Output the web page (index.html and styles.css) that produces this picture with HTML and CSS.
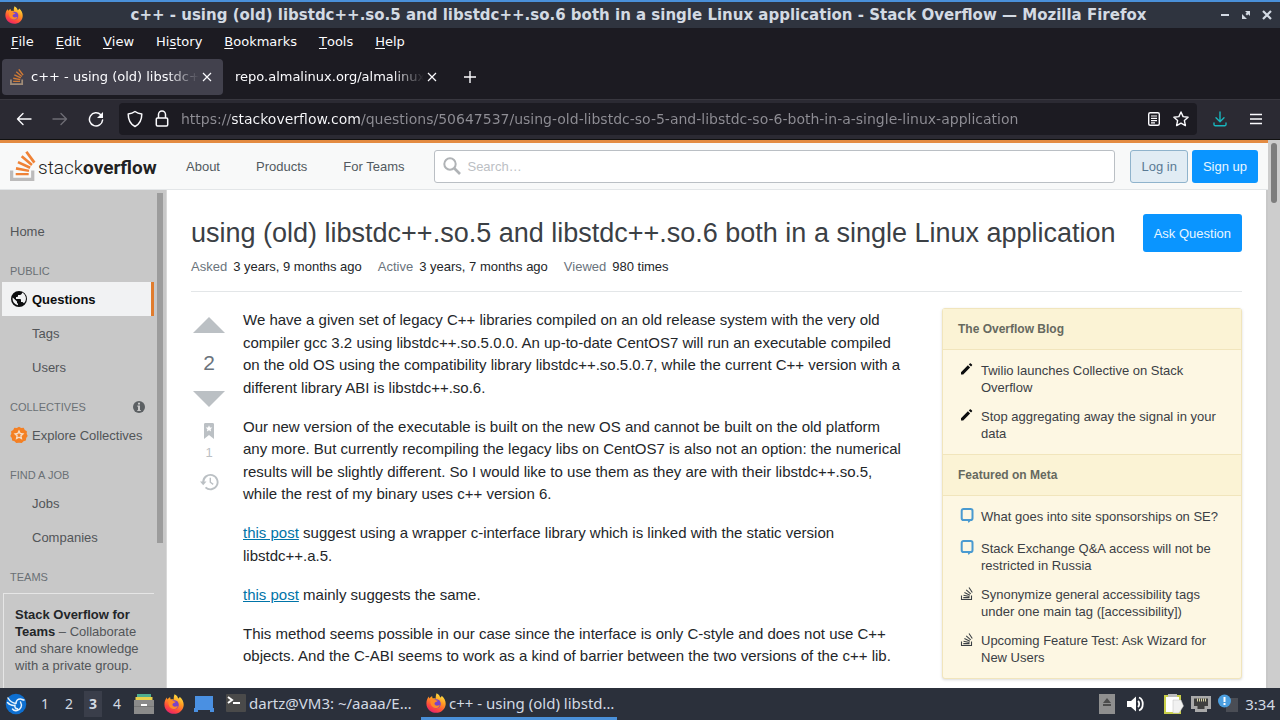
FILE: index.html
```html
<!DOCTYPE html>
<html lang="en">
<head>
<meta charset="UTF-8">
<meta name="viewport" content="width=device-width, initial-scale=1.0">
<title>c++ - using (old) libstdc++.so.5 and libstdc++.so.6 both in a single Linux application - Stack Overflow</title>
<link rel="stylesheet" href="styles.css">
</head>
<body>

<!-- shared icons -->
<svg class="defs" width="0" height="0" aria-hidden="true">
  <defs>
    <linearGradient id="ff-body" x1="0.8" y1="0" x2="0.3" y2="1">
      <stop offset="0" stop-color="#fff04a"/>
      <stop offset="0.4" stop-color="#ff9a22"/>
      <stop offset="0.75" stop-color="#ff4a3c"/>
      <stop offset="1" stop-color="#e5216f"/>
    </linearGradient>
    <symbol id="firefox" viewBox="0 0 20 20">
      <path fill="url(#ff-body)" d="M10.5 0.3c2.6 1.2 3.4 3 3.6 4.3 0.9-0.1 1.4-1 1.6-1.8 2.6 2.200 4.100 5 4 8.200-0.200 5.200-4.500 8.800-9.600 8.800C4.600 19.800 0.400 15.600 0.400 10.400c0-3 1-5.400 2.600-7 0 0.900 0.200 1.500 0.600 2 0.600-1.100 1.600-1.900 2.600-2.200-0.100 0.900 0.200 1.500 0.700 2.200 1-0.100 1.900 0 2.700 0.300 0.100-2 0.300-3.700 0.900-5.400z"/>
      <circle cx="10.300" cy="10.800" r="4.500" fill="#7a44c9"/>
      <path fill="#ff8a26" d="M4.500 7c1.500-0.900 3.500-0.800 5 0.100 0.900 0.500 1.700 0.700 2.300 0.500-0.400 1.300-1.900 1.400-2.800 2-0.900 0.700-0.700 2.300 0.900 2.900 1.600 0.500 2.700-0.500 3.900-0.100-0.900 2.100-3.300 3.200-5.600 2.400C5.300 13.700 4 10.300 4.500 7z"/>
    </symbol>
    <symbol id="stack" viewBox="0 0 32 37">
      <path fill="var(--tray)" d="M26 33v-9h4v13H0V24h4v9h22z"/>
      <path fill="var(--bars)" d="M21.500 0l-2.700 2 9.900 13.300 2.700-2L21.500 0zM26 18.400L13.300 7.800l2.100-2.500 12.700 10.600-2.100 2.500zM9.100 15.200l15 7 1.400-3-15-7-1.400 3zm14 10.790l0.680-2.950-16.100-3.350L7 23l16.100 2.990zM23 30H7v-3h16v3z"/>
    </symbol>
    <symbol id="stack-thin" viewBox="0 0 14 16">
      <path fill="none" stroke="currentColor" stroke-width="1.100" d="M1.500 9.500v4h10v-4M3.300 11.600h6.200M3.500 9.200l6 1.300M4.400 6.600l5.500 2.600M6.200 3.900l4.500 4M9 1.500l3.300 5"/>
    </symbol>
    <symbol id="pencil" viewBox="0 0 14 14">
      <path fill="currentColor" d="M1 10.200L7.900 3.300l2.200 2.200-6.900 6.900H1v-2.200zM8.800 2.400l1-1c0.300-0.300 0.700-0.300 1 0l1.200 1.200c0.300 0.300 0.300 0.700 0 1l-1 1-2.200-2.200z"/>
    </symbol>
    <symbol id="meta" viewBox="0 0 14 16">
      <path fill="none" stroke="#4a9ad0" stroke-width="2" d="M3.500 1h7.200A1.800 1.800 0 0 1 12.500 2.800v7.400A1.800 1.800 0 0 1 10.700 12H3.500a1.800 1.800 0 0 1-1.800-1.800V2.800A1.800 1.800 0 0 1 3.500 1z"/>
      <path fill="#4a9ad0" d="M7.500 12h4l-3 3z"/>
    </symbol>
    <symbol id="close" viewBox="0 0 10 10">
      <path fill="none" stroke="currentColor" stroke-width="1.200" d="M1 1l8 8M9 1L1 9"/>
    </symbol>
  </defs>
</svg>

<header class="titlebar">
  <svg class="titlebar-icon" width="18" height="18"><use href="#firefox"/></svg>
  <div class="titlebar-text">c++ - using (old) libstdc++.so.5 and libstdc++.so.6 both in a single Linux application - Stack Overflow — Mozilla Firefox</div>
  <div class="window-controls">
    <button aria-label="Minimize"><svg width="10" height="10" viewBox="0 0 10 10"><path fill="currentColor" d="M1 4h8v2H1z"/></svg></button>
    <button aria-label="Restore"><svg width="10" height="10" viewBox="0 0 10 10"><path fill="currentColor" d="M4 1h5v5L7.300 4.300 6 5.500 4.500 4l1.300-1.200zM1 4l5 5H1z"/></svg></button>
    <button aria-label="Close"><svg width="10" height="10" viewBox="0 0 10 10"><path fill="none" stroke="currentColor" stroke-width="2.200" d="M1 1l8 8M9 1L1 9"/></svg></button>
  </div>
</header>

<nav class="menubar">
  <button><u>F</u>ile</button>
  <button><u>E</u>dit</button>
  <button><u>V</u>iew</button>
  <button>Hi<u>s</u>tory</button>
  <button><u>B</u>ookmarks</button>
  <button><u>T</u>ools</button>
  <button><u>H</u>elp</button>
</nav>

<div class="tabstrip">
  <div class="tab active">
    <svg class="so-dark" width="14" height="16"><use href="#stack"/></svg>
    <span class="tab-label">c++ - using (old) libstdc++.so.5</span>
    <button aria-label="Close tab"><svg width="10" height="10"><use href="#close"/></svg></button>
  </div>
  <div class="tab">
    <span class="tab-label">repo.almalinux.org/almalinux/8</span>
    <button aria-label="Close tab"><svg width="10" height="10"><use href="#close"/></svg></button>
  </div>
  <button class="new-tab" aria-label="New tab"><svg width="12" height="12" viewBox="0 0 12 12"><path fill="none" stroke="currentColor" stroke-width="1.400" d="M6 0v12M0 6h12"/></svg></button>
</div>

<div class="toolbar">
  <button aria-label="Back"><svg width="16" height="16" viewBox="0 0 16 16"><path fill="none" stroke="currentColor" stroke-width="1.400" stroke-linecap="round" stroke-linejoin="round" d="M15 8H1.500M7 2.500L1.500 8 7 13.500"/></svg></button>
  <button aria-label="Forward" disabled><svg width="16" height="16" viewBox="0 0 16 16"><path fill="none" stroke="currentColor" stroke-width="1.400" stroke-linecap="round" stroke-linejoin="round" d="M1 8h13.500M9 2.500L14.500 8 9 13.500"/></svg></button>
  <button aria-label="Reload"><svg width="16" height="16" viewBox="0 0 16 16"><path fill="none" stroke="currentColor" stroke-width="1.500" stroke-linecap="round" d="M12.800 3.800A6.600 6.600 0 1 0 14.600 9"/><path fill="currentColor" d="M15 1v6H9z"/></svg></button>
  <div class="urlbar">
    <svg width="16" height="18" viewBox="0 0 16 18"><path fill="none" stroke="currentColor" stroke-width="1.500" stroke-linejoin="round" d="M8 1.500c2 1.500 4.200 2.200 6.800 2.500 0 5.700-1.800 10-6.800 12.500C3 14 1.200 9.700 1.200 4 3.800 3.700 6 3 8 1.500z"/></svg>
    <svg width="14" height="18" viewBox="0 0 14 18"><path fill="none" stroke="currentColor" stroke-width="1.500" d="M2.500 8h9a1.200 1.200 0 0 1 1.200 1.200v5.600a1.200 1.200 0 0 1-1.200 1.200h-9a1.200 1.200 0 0 1-1.200-1.200V9.200A1.200 1.200 0 0 1 2.500 8zM3.500 8V4.500a3.500 3.500 0 0 1 7 0V8"/></svg>
    <input type="text" aria-label="Address" value="https://stackoverflow.com/questions/50647537/using-old-libstdc-so-5-and-libstdc-so-6-both-in-a-single-linux-application">
    <button aria-label="Reader view"><svg width="14" height="16" viewBox="0 0 14 16"><rect x="1.700" y="1.700" width="10.600" height="12.600" rx="1.500" fill="none" stroke="currentColor" stroke-width="1.400"/><path stroke="currentColor" stroke-width="1.200" d="M4 5h6M4 7.300h6M4 9.600h6M4 11.900h4"/></svg></button>
    <button aria-label="Bookmark this page"><svg width="16" height="16" viewBox="0 0 16 16"><path fill="none" stroke="currentColor" stroke-width="1.400" stroke-linejoin="round" d="M8 1l2.100 4.600 5 0.600-3.700 3.400 1 5L8 12.100l-4.400 2.500 1-5L0.900 6.200l5-0.600z"/></svg></button>
  </div>
  <button class="downloads" aria-label="Downloads"><svg width="14" height="16" viewBox="0 0 14 16"><path fill="none" stroke="currentColor" stroke-width="1.400" stroke-linecap="round" stroke-linejoin="round" d="M7 1v9.500M3 6.800l4 4 4-4M1 12v1.500A1.200 1.200 0 0 0 2.200 14.700h9.600a1.200 1.200 0 0 0 1.200-1.200V12"/></svg></button>
  <button aria-label="Application menu"><svg width="14" height="12" viewBox="0 0 14 12"><path stroke="currentColor" stroke-width="1.500" d="M1 1.500h12M1 6h12M1 10.500h12"/></svg></button>
</div>

<div class="viewport">
  <div class="page">
    <header class="topbar">
      <a class="logo" href="#" aria-label="Stack Overflow">
        <svg class="so-color" width="26" height="30"><use href="#stack"/></svg>
        <span class="logo-text">stack<b>overflow</b></span>
      </a>
      <nav class="topnav">
        <a href="#">About</a>
        <a href="#">Products</a>
        <a href="#">For Teams</a>
      </nav>
      <label class="search">
        <svg width="18" height="18" viewBox="0 0 18 18"><circle cx="7" cy="7" r="5.700" fill="none" stroke="currentColor" stroke-width="2"/><path stroke="currentColor" stroke-width="2.600" d="M11 11l6 6"/></svg>
        <input type="text" placeholder="Search…" aria-label="Search">
      </label>
      <div class="account">
        <button class="btn btn-login">Log in</button>
        <button class="btn btn-primary">Sign up</button>
      </div>
    </header>

    <div class="columns">
      <aside class="sidebar">
        <nav>
          <a class="home" href="#">Home</a>
          <h2>PUBLIC</h2>
          <a class="current" href="#">
            <svg width="18" height="18" viewBox="0 0 18 18"><path fill="currentColor" d="M9 1a8 8 0 1 0 0 16A8 8 0 0 0 9 1zM8 15.320a6.400 6.400 0 0 1-5.230-7.750L7 11.400v0.600c0 0.900 0.100 1.600 1 1.600v1.720zm5.720-2c-0.200-0.660-1-1.320-1.720-1.320h-1v-2c0-0.500-0.500-1-1-1H6V7h1c0.440 0 1-0.560 1-1V5h2c0.900 0 2-1.100 2-2v-0.400a6.400 6.400 0 0 1 1.720 10.720z"/></svg>
            Questions
          </a>
          <a href="#">Tags</a>
          <a href="#">Users</a>
          <h2>COLLECTIVES
            <svg width="14" height="14" viewBox="0 0 14 14"><circle cx="7" cy="7" r="6" fill="#5c6063"/><path fill="#c9c9c9" d="M6 2.800h2v1.800H6zM5.300 5.600H8v4.300h0.800v1.200H5.300V9.900H6V6.800h-0.700z"/></svg>
          </h2>
          <a href="#">
            <svg width="18" height="18" viewBox="0 0 18 18"><path fill="#f48024" d="M9 0.800l2.200 1.100 2.500-0.100 1.100 2.200 2.100 1.300-0.200 2.500 1 2.200-1.500 2-0.300 2.500-2.400 0.800-1.700 1.800L9 16.700l-2.800 0.400-1.700-1.800-2.400-0.800-0.300-2.500-1.500-2 1-2.200-0.200-2.500L3.200 4l1.100-2.200 2.500 0.100z"/><path fill="none" stroke="#f6dcc6" stroke-width="1.400" d="M9 5l1.200 2.500 2.700 0.400-2 1.900 0.500 2.700L9 11.200l-2.400 1.300 0.500-2.700-2-1.900 2.700-0.400z"/></svg>
            Explore Collectives
          </a>
          <h2>FIND A JOB</h2>
          <a href="#">Jobs</a>
          <a href="#">Companies</a>
          <h2>TEAMS</h2>
        </nav>
        <p class="teams"><b>Stack Overflow for Teams</b> – Collaborate and share knowledge with a private group.</p>
        <div class="sidebar-thumb"></div>
      </aside>

      <main>
        <div class="headline">
          <h1>using (old) libstdc++.so.5 and libstdc++.so.6 both in a single Linux application</h1>
          <button class="btn btn-primary btn-ask">Ask Question</button>
        </div>
        <dl class="stats">
          <div><dt>Asked</dt><dd>3 years, 9 months ago</dd></div>
          <div><dt>Active</dt><dd>3 years, 7 months ago</dd></div>
          <div><dt>Viewed</dt><dd>980 times</dd></div>
        </dl>

        <div class="question">
          <div class="votes">
            <button aria-label="Up vote"><svg width="32" height="16" viewBox="0 0 32 16"><path fill="currentColor" d="M0 16h32L16 0z"/></svg></button>
            <span class="score">2</span>
            <button aria-label="Down vote"><svg width="32" height="16" viewBox="0 0 32 16"><path fill="currentColor" d="M0 0h32L16 16z"/></svg></button>
            <button class="bookmark" aria-label="Bookmark"><svg width="12" height="18" viewBox="0 0 12 18"><path fill="currentColor" d="M1 2.500C1 1.500 1.500 1 2.500 1h7c1 0 1.500 0.500 1.500 1.500V17l-5-4-5 4z"/><path fill="#fff" d="M6 3.200l1 2.200 2.300 0.200-1.700 1.600 0.500 2.300L6 8.300 3.900 9.500l0.500-2.300-1.700-1.600L5 5.400z"/></svg></button>
            <span class="saves">1</span>
            <button aria-label="Timeline"><svg width="19" height="18" viewBox="0 0 19 18"><path fill="none" stroke="currentColor" stroke-width="1.900" d="M3.200 9a7.200 7.200 0 1 1 2.300 5.400"/><path fill="currentColor" d="M0 8.500h6.500L3.200 12.300z"/><path fill="none" stroke="currentColor" stroke-width="1.400" d="M10.300 4.800v4.400l2.900 2.200"/></svg></button>
          </div>

          <article class="post">
            <p>We have a given set of legacy C++ libraries compiled on an old release system with the very old compiler gcc 3.2 using libstdc++.so.5.0.0. An up-to-date CentOS7 will run an executable compiled on the old OS using the compatibility library libstdc++.so.5.0.7, while the current C++ version with a different library ABI is libstdc++.so.6.</p>
            <p>Our new version of the executable is built on the new OS and cannot be built on the old platform any more. But currently recompiling the legacy libs on CentOS7 is also not an option: the numerical results will be slightly different. So I would like to use them as they are with their libstdc++.so.5, while the rest of my binary uses c++ version 6.</p>
            <p><a href="#">this post</a> suggest using a wrapper c-interface library which is linked with the static version libstdc++.a.5.</p>
            <p><a href="#">this post</a> mainly suggests the same.</p>
            <p>This method seems possible in our case since the interface is only C-style and does not use C++ objects. And the C-ABI seems to work as a kind of barrier between the two versions of the c++ lib.</p>
          </article>

          <aside class="bulletin">
            <h3>The Overflow Blog</h3>
            <ul>
              <li><svg class="pencil" width="14" height="14"><use href="#pencil"/></svg><a href="#">Twilio launches Collective on Stack Overflow</a></li>
              <li><svg class="pencil" width="14" height="14"><use href="#pencil"/></svg><a href="#">Stop aggregating away the signal in your data</a></li>
            </ul>
            <h3>Featured on Meta</h3>
            <ul>
              <li><svg width="14" height="16"><use href="#meta"/></svg><a href="#">What goes into site sponsorships on SE?</a></li>
              <li><svg width="14" height="16"><use href="#meta"/></svg><a href="#">Stack Exchange Q&amp;A access will not be restricted in Russia</a></li>
              <li><svg width="14" height="16"><use href="#stack-thin"/></svg><a href="#">Synonymize general accessibility tags under one main tag ([accessibility])</a></li>
              <li><svg width="14" height="16"><use href="#stack-thin"/></svg><a href="#">Upcoming Feature Test: Ask Wizard for New Users</a></li>
            </ul>
          </aside>
        </div>
      </main>
    </div>
  </div>
  <div class="scrollbar"><div class="thumb"></div></div>
</div>

<footer class="taskbar">
  <button class="start" aria-label="Start menu"><svg width="22" height="22" viewBox="0 0 22 22"><circle cx="11" cy="11" r="10.300" fill="#0e6fd0"/><path fill="none" stroke="#e8f3fc" stroke-width="1.500" stroke-linecap="round" d="M3 5c2 3.500 4.500 5 8 5.500M2.500 9.500c2 2.300 4.500 3.200 7.500 2.800M11 10.500c0-3 2-4.700 4.500-4.500 1.500 0.200 2 1 3.500 1M15.500 9c2 3.500 0.500 7.500-3.500 8.500-2 0.400-3.500-0.200-4.500-1.500M10 12.300c-0.500 2 0.500 3.500 2.500 3.500"/></svg></button>
  <div class="desktops">
    <button>1</button>
    <button>2</button>
    <button class="on">3</button>
    <button>4</button>
  </div>
  <div class="launchers">
    <button aria-label="Files"><svg width="20" height="22" viewBox="0 0 20 22"><path fill="#4fae8f" d="M3 1h14v4H3z"/><path fill="#e9d04c" d="M1.500 4h17v4h-17z"/><path fill="#8b8b8b" d="M0 7h20v14H0z"/><path fill="#777" d="M0 13h20v1H0z"/><path fill="#fff" d="M7 11h6v2H7z"/></svg></button>
    <button aria-label="Firefox"><svg width="20" height="20"><use href="#firefox"/></svg></button>
    <button aria-label="Show desktop"><svg width="20" height="18" viewBox="0 0 20 18"><path fill="#4a90e2" d="M1 1h18v12h1v4h-4v-2H4v2H0v-4h1z"/></svg></button>
  </div>
  <div class="tasks">
    <button>
      <svg width="20" height="18" viewBox="0 0 20 18"><rect width="20" height="18" rx="1" fill="#4a4a4a"/><path fill="none" stroke="#fff" stroke-width="2" d="M2 3l4 3-4 3"/><path fill="#fff" d="M7 8h7v2H7z"/></svg>
      <span>dartz@VM3: ~/aaaa/E…</span>
    </button>
    <button class="focused">
      <svg width="20" height="20"><use href="#firefox"/></svg>
      <span>c++ - using (old) libstd…</span>
    </button>
  </div>
  <div class="tray">
    <button aria-label="Eject"><svg width="16" height="20" viewBox="0 0 16 20"><path fill="#8f8f8f" d="M0 0h16v20H0z"/><path fill="#4c4c4c" d="M8 4l4 5H4zM4 10h8v2H4z"/></svg></button>
    <button aria-label="Volume"><svg width="18" height="16" viewBox="0 0 18 16"><path fill="#fff" d="M0 5h4l5-4.500v15L4 11H0z"/><path fill="none" stroke="#fff" stroke-width="1.800" d="M11 5c1.600 1.500 1.600 4.500 0 6M12 1.500c5 2 5 11 0 13"/></svg></button>
    <button class="clipboard" aria-label="Clipboard"><svg width="20" height="22" viewBox="0 0 20 22"><path fill="#c9cf4a" d="M0 2h17v19H0z"/><path fill="#fff" d="M2 4h13v15H2z"/><path fill="#bcbcbc" d="M4 1h9v3H4z"/><path fill="#f1f1f1" stroke="#bdbdbd" stroke-width="0.500" d="M9 7h8l2.500 6-4.500 7H9z"/></svg></button>
    <button aria-label="Network"><svg width="20" height="18" viewBox="0 0 20 18"><path fill="#a9a9a9" d="M0 1h20v13h-4v3H4v-3H0z"/><path fill="#3f3f3f" d="M3 3.500h14V11h-3.500v3h-7v-3H3z"/><path stroke="#d8d4a8" d="M6.500 3.500v3M8.500 3.500v3M10.500 3.500v3M12.500 3.500v3M14.500 3.500v3"/></svg></button>
    <button aria-label="Updates"><svg width="20" height="20" viewBox="0 0 20 20"><path fill="#4a4d55" d="M8 4h12v14H8z"/><circle cx="6.500" cy="7" r="6.500" fill="#4c9fe0"/><path fill="#fff" d="M5.500 3h2v5h-2zM5.500 9h2v2h-2z"/></svg></button>
    <time>3:34</time>
  </div>
</footer>

</body>
</html>
```
FILE: styles.css
```css
:root{
  --ui:"DejaVu Sans",Verdana,sans-serif;
  --web:"Liberation Sans",Arial,sans-serif;
  --panel:"Noto Sans","Open Sans",sans-serif;
  --chrome:#1c1b22;
  --toolbar:#2b2a33;
  --orange:#e38b42;
  --blue:#0a95ff;
}
*,*::before,*::after{box-sizing:border-box;margin:0;padding:0}
body{
  height:100vh;
  display:flex;
  flex-direction:column;
  overflow:hidden;
  font:13px/17px var(--web);
  color:#232629;
}
button{border:0;background:none;color:inherit;font:inherit;display:flex;align-items:center;justify-content:center}
input{border:0;background:none;outline:0;font:inherit;min-width:0}
a{color:inherit;text-decoration:none}
ul{list-style:none}
svg{flex:none;display:block}
.defs{position:absolute}

/* stack icon colours */
.so-color{--tray:#bcbbbb;--bars:#ef8236}
.so-dark{--tray:#a08c78;--bars:#d07a35}

/* window title */
.titlebar{
  display:grid;grid-template-columns:1fr auto 1fr;align-items:center;
  height:28px;
  padding:0 8px 0 5px;
  background:#2f343f;
  border-top:2px solid #4a90d9;
  color:#d3dae3;
  font:bold 15px/26px var(--ui);
}
.titlebar-text{white-space:nowrap}
.window-controls{display:flex;gap:11px;justify-self:end}

/* firefox chrome */
.menubar{
  display:flex;gap:22px;
  height:27px;
  padding:5px 11px 4px;
  background:var(--chrome);
  color:#fbfbfe;
  font:13px/18px var(--ui);
}
.menubar u{text-underline-offset:2px}
.tabstrip{
  display:flex;align-items:center;
  height:44px;
  padding:0 2px;
  background:var(--chrome);
  color:#fbfbfe;
  font:13px/18px var(--ui);
}
.tab{
  display:flex;align-items:center;gap:3px;
  width:221px;height:36px;
  padding:0 7px 0 12px;
  border-radius:4px;
}
.tab.active{background:#42414d;padding:0 11px 0 8px}
.tab.active .tab-label{margin-left:4px}
.tab-label{
  flex:1;
  overflow:hidden;white-space:nowrap;
  -webkit-mask-image:linear-gradient(to left,transparent,#000 32px);
  mask-image:linear-gradient(to left,transparent,#000 32px);
}
.new-tab{padding:8px;margin-left:12px}
.toolbar{
  display:flex;align-items:center;
  height:40px;
  padding:0 16px 1px;
  background:var(--toolbar);
  border-top:1px solid #38373f;
  color:#fbfbfe;
}
.toolbar > button{width:16px;margin-right:20px}
.toolbar > button:disabled{color:#6d6c74}
.toolbar > button:last-child{margin-right:0}
.toolbar > .downloads{color:#19b5bd;margin-left:15px}
.urlbar{
  flex:1;
  display:flex;align-items:center;gap:12px;
  height:32px;
  margin-left:-5px;
  padding:0 8px;
  border-radius:4px;
  background:var(--chrome);
}
.urlbar input{
  flex:1;
  height:24px;
  font:14px/24px var(--ui);
  /* host is brighter than the rest of the address */
  background:linear-gradient(to right,#8f8e95 50px,#fbfbfe 50px,#fbfbfe 180px,#8f8e95 180px);
  -webkit-background-clip:text;
  background-clip:text;
  color:transparent;
}

/* web page */
.viewport{flex:1;min-height:0;display:flex;border-top:1px solid #111}
.page{flex:1;min-width:0;display:flex;flex-direction:column;background:#fff}
.scrollbar{width:12px;padding:3px;background:#cdcdcd}
.thumb{height:60px;border-radius:3px;background:#7d7d7d}
.topbar{
  display:flex;align-items:center;
  height:50px;
  padding:0 10px;
  border-top:3px solid var(--orange);
  border-bottom:1px solid #e3e6e8;
  background:#f8f9f9;
}
.logo{display:flex;align-items:center;gap:2px;width:146px}
.logo-text{font:300 19px/24px Roboto,sans-serif;color:#222;padding-top:3px}
.logo-text b{font-weight:700}
.topnav{display:flex;gap:36px;margin:0 30px;color:#525960;white-space:nowrap}
.search{
  flex:1;
  display:flex;align-items:center;gap:6px;
  height:33px;
  padding:0 8px;
  border:1px solid #babfc4;
  border-radius:3px;
  background:#fff;
  color:#b0b3b6;
}
.search input{flex:1}
.search input::placeholder{color:#bcc0c4}
.account{display:flex;gap:4px;margin-left:15px}
.btn{
  height:33px;
  padding:0 10px;
  border:1px solid transparent;
  border-radius:3px;
  white-space:nowrap;
}
.btn-login{background:#e1ecf4;border-color:#8fb3cc;color:#5a7a94}
.btn-primary{background:var(--blue);color:#e8f5ff}

.columns{flex:1;min-height:0;display:flex}
.sidebar{
  position:relative;
  width:167px;
  padding:24px 12px 0 2px;
  background:#c8c8c8;
  border-right:1px solid #d8d8d8;
  overflow:hidden;
  color:#525558;
}
.sidebar nav a{
  display:flex;align-items:center;gap:4px;
  height:34px;
  padding-left:30px;
  white-space:nowrap;
}
.sidebar nav a:has(svg){padding-left:8px}
.sidebar nav .home{padding-left:8px}
.sidebar nav .current{
  background:#f1f2f3;
  border-right:3px solid #e07c2e;
  color:#0c0d0e;
  font-weight:bold;
}
.sidebar h2{
  display:flex;justify-content:space-between;
  height:34px;
  padding:16px 8px 4px;
  font-size:11px;line-height:14px;font-weight:normal;
  color:#6a7075;
}
.teams{
  height:200px;
  margin:5px 0 0 1px;
  padding:12px 8px 12px 11px;
  border:1px solid #e6e6e6;
  border-right:0;
}
.teams b{color:#232629}
.sidebar-thumb{position:absolute;top:3px;right:3px;width:6px;height:350px;background:#9c9c9c}

main{
  flex:1;min-width:0;
  padding:24px 24px 0;
  border-right:2px solid #c8c8c8;
  overflow:hidden;
}
.headline{display:flex;align-items:flex-start;justify-content:space-between;gap:12px}
h1{font-size:27px;line-height:38px;font-weight:normal;color:#3b4045}
.btn-ask{height:38px}
.stats{
  display:flex;gap:16px;
  padding:6px 0 16px;
  border-bottom:1px solid #e3e6e8;
}
.stats div{display:flex;gap:6px}
.stats dt{color:#6a737c}

.question{display:flex;align-items:flex-start;padding-top:16px}
.votes{
  display:flex;flex-direction:column;align-items:center;
  width:36px;
  padding-top:9px;
  color:#bbc0c4;
}
.score{font-size:21px;line-height:26px;margin:17px 0 15px;color:#6a737c}
.bookmark{margin-top:15px}
.saves{line-height:17px;margin:4px 0 12px}
.post{flex:1;margin:0 40px 0 16px;padding-top:1px;font-size:15px;line-height:1.5}
.post p{margin-bottom:1.1em}
.post a{color:#0074a8;text-decoration:underline}

.bulletin{
  width:300px;
  border:1px solid #f1e5bc;
  border-radius:3px;
  background:#fdf7e3;
  box-shadow:0 1px 3px rgba(0,0,0,.15);
  color:#3b4045;
}
.bulletin h3{
  padding:12px 15px;
  border-bottom:1px solid #f1e5bc;
  background:#fbf3d5;
  font-size:12px;line-height:16px;
  color:#66695f;
}
.bulletin ul + h3{border-top:1px solid #f1e5bc}
.bulletin ul{display:flex;flex-direction:column;gap:12px;padding:12px 16px}
.bulletin li{display:flex;gap:7px;min-height:20px}
.bulletin li svg{margin-left:1px}
.pencil{color:#0c0d0e}

/* lxqt panel */
.taskbar{
  display:flex;align-items:center;
  height:32px;
  padding:0 5px;
  background:#2b303b;
  color:#d3dae3;
  font:15px/24px var(--panel);
}
.desktops{display:flex;gap:6px;margin-left:9px}
.desktops button{width:18px;height:26px;font-size:14px}
.desktops .on{background:#3a3e4a;font-weight:bold}
.launchers{display:flex;align-items:center;gap:10px;margin-left:8px}
.tasks{display:flex;gap:4px;margin-left:7px}
.tasks button{
  justify-content:flex-start;gap:3px;
  width:196px;height:32px;
  padding:0 5px;
  border-bottom:3px solid transparent;
  white-space:nowrap;
}
.tasks .focused{border-bottom-color:#4a90d9}
.tray{display:flex;align-items:center;gap:7px;margin-left:auto}
.tray button:first-child{margin-right:5px}
.tray .clipboard{margin-left:12px}
.tray time{font-size:15px}
```
